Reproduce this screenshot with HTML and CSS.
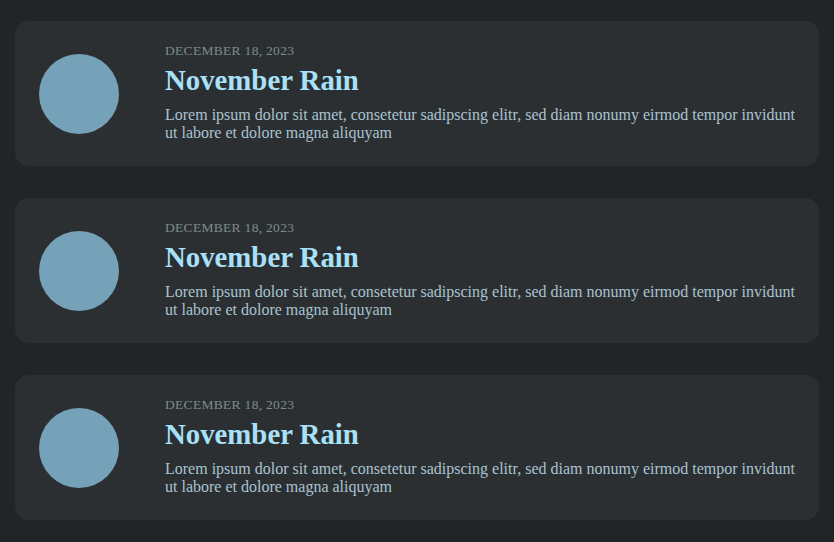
FILE: index.html
```html
<!DOCTYPE html>
<html>
<head>
<meta charset="utf-8">
<link rel="stylesheet" href="styles.css">
</head>
<body>
<div class="list">
  <div class="card">
    <div class="avatar"></div>
    <div class="content">
      <div class="date">December 18, 2023</div>
      <h2 class="title">November Rain</h2>
      <p class="text">Lorem ipsum dolor sit amet, consetetur sadipscing elitr, sed diam nonumy eirmod tempor invidunt ut labore et dolore magna aliquyam</p>
    </div>
  </div>
  <div class="card">
    <div class="avatar"></div>
    <div class="content">
      <div class="date">December 18, 2023</div>
      <h2 class="title">November Rain</h2>
      <p class="text">Lorem ipsum dolor sit amet, consetetur sadipscing elitr, sed diam nonumy eirmod tempor invidunt ut labore et dolore magna aliquyam</p>
    </div>
  </div>
  <div class="card">
    <div class="avatar"></div>
    <div class="content">
      <div class="date">December 18, 2023</div>
      <h2 class="title">November Rain</h2>
      <p class="text">Lorem ipsum dolor sit amet, consetetur sadipscing elitr, sed diam nonumy eirmod tempor invidunt ut labore et dolore magna aliquyam</p>
    </div>
  </div>
</div>
</body>
</html>
```
FILE: styles.css
```css
html, body {
  margin: 0;
  padding: 0;
  background: #222528;
  font-family: "Liberation Serif", "Times New Roman", serif;
}
.list {
  display: flex;
  flex-direction: column;
  gap: 32px;
  padding: 21px 15px;
}
.card {
  display: flex;
  align-items: center;
  gap: 46px;
  background: #2c2f31;
  border-radius: 14px;
  height: 145px;
  box-sizing: border-box;
  padding: 0 24px;
}
.avatar {
  flex: 0 0 80px;
  width: 80px;
  height: 80px;
  border-radius: 50%;
  background: #76a2b9;
}
.content {
  flex: 1;
  padding-bottom: 3px;
}
.date {
  font-size: 13.5px;
  line-height: 16px;
  letter-spacing: 0.3px;
  text-transform: uppercase;
  color: #7d8c8e;
}
.title {
  margin: 5px 0 9px;
  font-size: 28.8px;
  line-height: 33px;
  font-weight: bold;
  color: #a8e1fa;
}
.text {
  margin: 0;
  font-size: 16px;
  line-height: 18px;
  color: #a9c3d2;
}
```
